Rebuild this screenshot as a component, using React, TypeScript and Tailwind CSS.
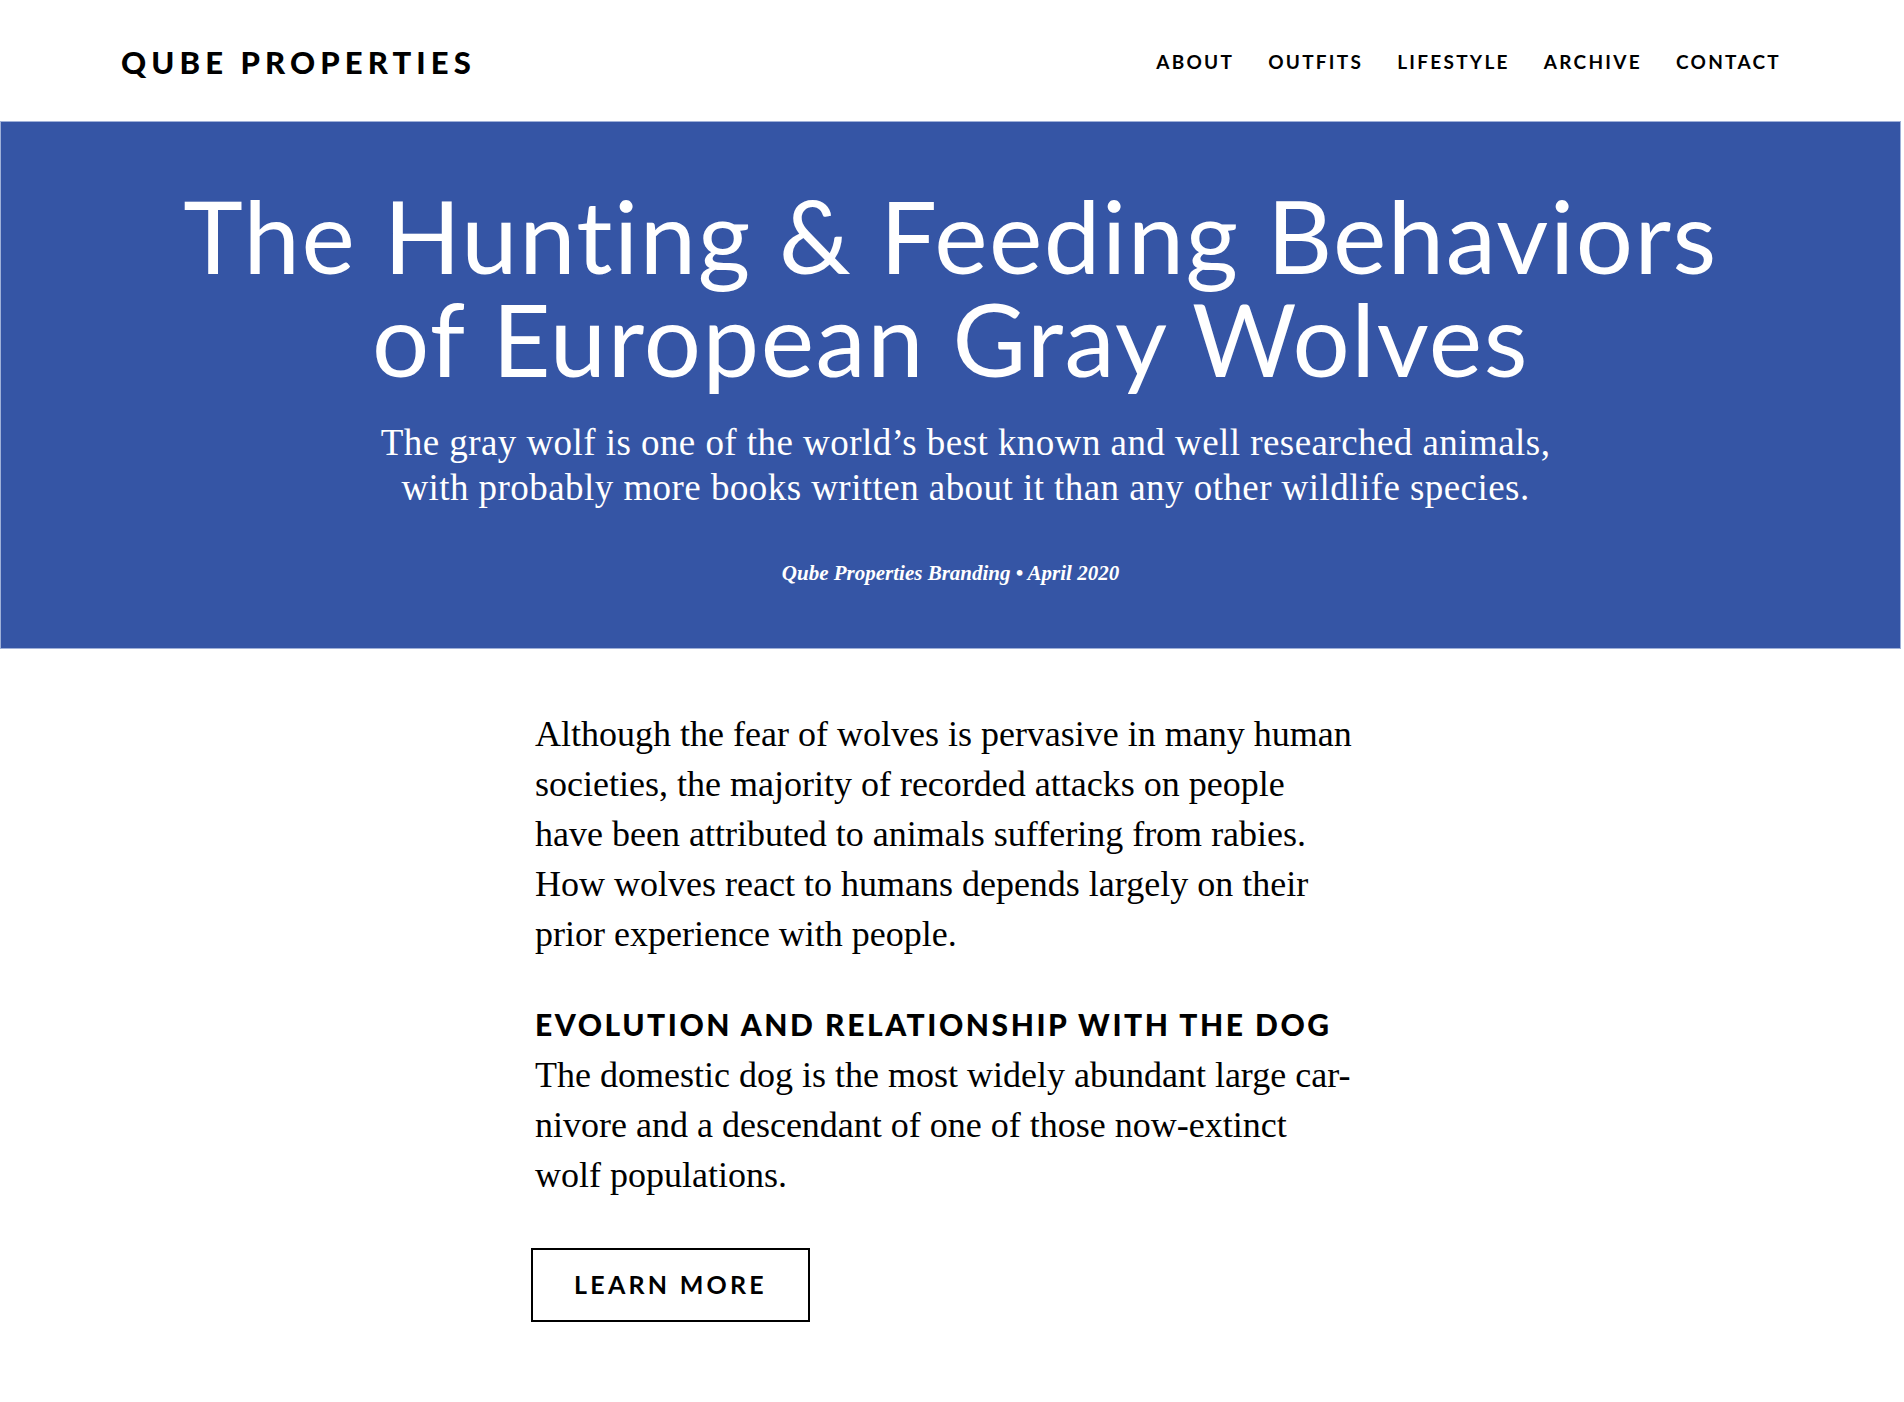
import React from 'react';

const navItems = ['About', 'Outfits', 'Lifestyle', 'Archive', 'Contact'];

const sans = "font-['Lato','Noto_Sans',sans-serif]";
const serif = "font-['Liberation_Serif','DejaVu_Serif',serif]";

const App: React.FC = () => {
  return (
    <div className="min-h-screen bg-white text-black">
      {/* Header */}
      <header className="h-[121px] px-[121px] flex items-center justify-between">
        <a href="#" className={`${sans} text-[31px] font-black tracking-[0.165em] leading-none pt-[3px]`}>
          QUBE PROPERTIES
        </a>
        <nav className="flex items-center gap-[34px] pt-[2px] pr-[2px]">
          {navItems.map((item) => (
            <a
              key={item}
              href="#"
              className={`${sans} text-[19px] font-bold uppercase tracking-[0.12em] leading-none`}
            >
              {item}
            </a>
          ))}
        </nav>
      </header>

      {/* Hero */}
      <section className="mr-[3px] h-[528px] bg-[#3555a5] border border-[#9fb0d8] text-white text-center pt-[62px]">
        <h1 className={`${sans} text-[101px] font-normal leading-[103px] tracking-[0.015em]`}>
          The Hunting &amp; Feeding Behaviors
          <br />
          of European Gray Wolves
        </h1>
        <p className={`${serif} text-[37px] leading-[45px] tracking-[0.012em] mt-[30px] pl-[30px] max-w-[1330px] mx-auto`}>
          The gray wolf is one of the world’s best known and well researched animals,
          <br />
          with probably more books written about it than any other wildlife species.
        </p>
        <p className={`${serif} text-[21px] italic font-bold mt-[48px]`}>
          Qube Properties Branding • April 2020
        </p>
      </section>

      {/* Article */}
      <main className="w-[834px] mx-auto pt-[60px] pb-[80px]">
        <p className={`${serif} text-[36px] leading-[50px] whitespace-nowrap`}>
          Although the fear of wolves is pervasive in many human
          <br />
          societies, the majority of recorded attacks on people
          <br />
          have been attributed to animals suffering from rabies.
          <br />
          How wolves react to humans depends largely on their
          <br />
          prior experience with people.
        </p>

        <h2 className={`${sans} text-[30px] font-black uppercase tracking-[0.085em] leading-[36px] mt-[47px]`}>
          Evolution and Relationship with the Dog
        </h2>
        <p className={`${serif} text-[36px] leading-[50px] mt-[8px] whitespace-nowrap`}>
          The domestic dog is the most widely abundant large car-
          <br />
          nivore and a descendant of one of those now-extinct
          <br />
          wolf populations.
        </p>

        <button
          type="button"
          className={`${sans} mt-[48px] -ml-[4px] w-[279px] h-[74px] border-2 border-black text-[25px] font-bold uppercase tracking-[0.13em]`}
        >
          Learn More
        </button>
      </main>
    </div>
  );
};

export default App;
